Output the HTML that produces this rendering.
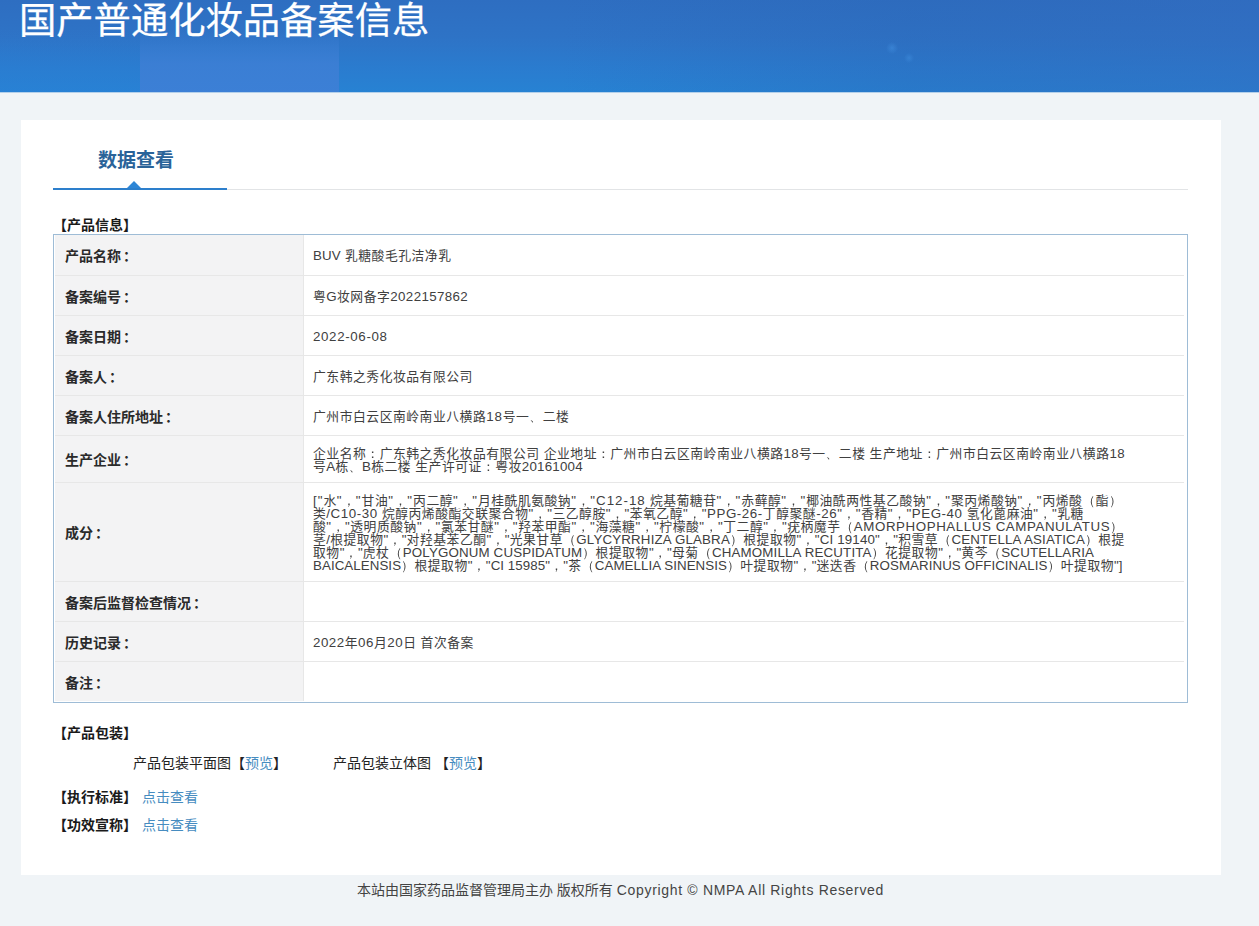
<!DOCTYPE html>
<html lang="zh-CN">
<head>
<meta charset="utf-8">
<title>国产普通化妆品备案信息</title>
<style>
*{box-sizing:border-box;margin:0;padding:0}
html,body{width:1259px;height:926px;overflow:hidden}
body{background:#f0f4f7;font-family:"Liberation Sans","Noto Sans CJK SC",sans-serif;font-size:14px;color:#333;position:relative;text-spacing-trim:space-all}
.a{letter-spacing:var(--ls,0px)}
.p{font-family:"WenQuanYi Zen Hei","Noto Sans CJK SC",sans-serif}
.hdr{position:absolute;left:0;top:0;width:1259px;height:93px;border-bottom:1px solid #b4d0ea;overflow:hidden;background:linear-gradient(180deg,#2e6ec1 0%,#2e73c6 40%,#2a7ccf 75%,#2782d3 100%)}
.hb1{position:absolute;left:140px;top:30px;width:199px;height:62px;background:linear-gradient(180deg,rgba(64,127,213,0) 0,rgba(64,127,213,.45) 30%,rgba(63,127,213,.8) 55%,rgba(62,127,214,.9) 100%)}
.hb2{position:absolute;left:560px;top:0;width:699px;height:92px;background:linear-gradient(90deg,rgba(44,100,180,0),rgba(44,100,180,.3) 50%,rgba(50,106,190,.5))}
.hb4{position:absolute;left:880px;top:36px;width:44px;height:34px;background:radial-gradient(circle 6px at 12px 12px,rgba(70,150,230,.45),rgba(70,150,230,0)),radial-gradient(circle 5px at 29px 22px,rgba(70,150,230,.4),rgba(70,150,230,0))}
.hb3{position:absolute;left:0;top:0;width:140px;height:92px;background:linear-gradient(180deg,rgba(42,128,215,0) 30%,rgba(42,128,215,.4) 100%)}
.hdr h1{position:absolute;left:19px;top:-6px;font-size:37.3px;line-height:54px;font-weight:400;color:#fff;white-space:nowrap;-webkit-text-stroke:.25px #fff}
.card{position:absolute;left:21px;top:120px;width:1200px;height:755px;background:#fff}
.tab{position:absolute;left:98px;top:147px;font-size:19px;line-height:28px;font-weight:700;color:#2a6399;white-space:nowrap}
.ln-g{position:absolute;left:53px;top:189px;width:1135px;height:1px;background:#e2e4e6}
.ln-b{position:absolute;left:53px;top:188px;width:174px;height:2px;background:#2d7fcc}
.tri{position:absolute;left:127px;top:181px;width:0;height:0;border-left:7px solid transparent;border-right:7px solid transparent;border-bottom:7px solid #2e86d6}
.sec{position:absolute;left:53px;font-size:14px;font-weight:700;color:#1a1a1a;line-height:20px;white-space:nowrap}
.tbl{position:absolute;left:53px;top:234px;width:1135px;height:469px;border:1px solid #9ebcd6;background:#fff}
.lab{position:absolute;left:1px;width:248px;background:#f3f3f4;border-bottom:1px solid #e7e7e7;font-size:14px;font-weight:700;color:#2a2a2a;padding-left:10px;padding-bottom:0px;display:flex;align-items:center;white-space:nowrap}
.val{position:absolute;left:249px;width:881px;border-left:1px solid #e7e7e7;border-bottom:1px solid #e7e7e7;font-size:13.33px;color:#404040;padding-left:9px;padding-top:2px;display:flex;align-items:center}
.val.m{padding-top:2px}
.last{border-bottom:0}
.lab .p{font-family:"Noto Sans CJK JP",sans-serif;position:relative;left:2px}
.val div{line-height:13.1px;white-space:nowrap;font-size:12.8px;letter-spacing:.53px}
.val .a{font-size:13.33px}
.val .ln{display:block;height:13.1px;line-height:13.1px}
.t{position:absolute;white-space:nowrap;line-height:20px;color:#222}
.sp{display:inline-block;width:4px}
a{color:#468cc0;text-decoration:none}
.lk{font-weight:400;margin-left:5px}
.foot{position:absolute;left:0;top:880px;width:1241px;text-align:center;font-size:14px;line-height:20px;color:#444;white-space:nowrap}
</style>
</head>
<body>
<div class="hdr">
<div class="hb1"></div><div class="hb2"></div><div class="hb3"></div><div class="hb4"></div>
<h1>国产普通化妆品备案信息</h1></div>
<div class="card"></div>
<div class="tab">数据查看</div>
<div class="ln-g"></div><div class="ln-b"></div><div class="tri"></div>
<div class="sec" style="top:215px">【产品信息】</div>
<div class="tbl">
 <div class="lab" style="top:0px;height:41px"><span>产品名称<span class="p">：</span></span></div><div class="val" style="top:0px;height:41px"><div><span class="ln" id="v1" style="--ls:0.133px"><span class="a">BUV</span> 乳糖酸毛孔洁净乳</span></div></div>
 <div class="lab" style="top:41px;height:40px"><span>备案编号<span class="p">：</span></span></div><div class="val" style="top:41px;height:40px"><div><span class="ln" id="v2" style="--ls:0.345px">粤<span class="a">G</span>妆网备字<span class="a">2022157862</span></span></div></div>
 <div class="lab" style="top:81px;height:40px"><span>备案日期<span class="p">：</span></span></div><div class="val" style="top:81px;height:40px"><div><span class="ln" id="v3" style="--ls:0.640px"><span class="a">2022-06-08</span></span></div></div>
 <div class="lab" style="top:121px;height:40px"><span>备案人<span class="p">：</span></span></div><div class="val" style="top:121px;height:40px"><div><span class="ln" id="v4" style="--ls:0.000px">广东韩之秀化妆品有限公司</span></div></div>
 <div class="lab" style="top:161px;height:40px"><span>备案人住所地址<span class="p">：</span></span></div><div class="val" style="top:161px;height:40px"><div><span class="ln" id="v5" style="--ls:0.800px">广州市白云区南岭南业八横路<span class="a">18</span>号一<span class="p">、</span>二楼</span></div></div>
 <div class="lab" style="top:201px;height:47px"><span>生产企业<span class="p">：</span></span></div><div class="val m" style="top:201px;height:47px"><div><span class="ln" id="v6a" style="--ls:0.250px">企业名称<span class="p">：</span>广东韩之秀化妆品有限公司 企业地址<span class="p">：</span>广州市白云区南岭南业八横路<span class="a">18</span>号一<span class="p">、</span>二楼 生产地址<span class="p">：</span>广州市白云区南岭南业八横路<span class="a">18</span></span><span class="ln" id="v6b" style="--ls:0.200px">号<span class="a">A</span>栋<span class="p">、</span><span class="a">B</span>栋二楼 生产许可证<span class="p">：</span>粤妆<span class="a">20161004</span></span></div></div>
 <div class="lab" style="top:248px;height:99px"><span>成分<span class="p">：</span></span></div><div class="val m" style="top:248px;height:99px"><div><span class="ln" id="i1" style="--ls:1.008px"><span class="a">[&quot;</span>水<span class="a">&quot;</span><span class="p">，</span><span class="a">&quot;</span>甘油<span class="a">&quot;</span><span class="p">，</span><span class="a">&quot;</span>丙二醇<span class="a">&quot;</span><span class="p">，</span><span class="a">&quot;</span>月桂酰肌氨酸钠<span class="a">&quot;</span><span class="p">，</span><span class="a">&quot;C12-18</span> 烷基葡糖苷<span class="a">&quot;</span><span class="p">，</span><span class="a">&quot;</span>赤藓醇<span class="a">&quot;</span><span class="p">，</span><span class="a">&quot;</span>椰油酰两性基乙酸钠<span class="a">&quot;</span><span class="p">，</span><span class="a">&quot;</span>聚丙烯酸钠<span class="a">&quot;</span><span class="p">，</span><span class="a">&quot;</span>丙烯酸<span class="p">（</span>酯<span class="p">）</span></span><span class="ln" id="i2" style="--ls:0.577px">类<span class="a">/C10-30</span> 烷醇丙烯酸酯交联聚合物<span class="a">&quot;</span><span class="p">，</span><span class="a">&quot;</span>三乙醇胺<span class="a">&quot;</span><span class="p">，</span><span class="a">&quot;</span>苯氧乙醇<span class="a">&quot;</span><span class="p">，</span><span class="a">&quot;PPG-26-</span>丁醇聚醚<span class="a">-26&quot;</span><span class="p">，</span><span class="a">&quot;</span>香精<span class="a">&quot;</span><span class="p">，</span><span class="a">&quot;PEG-40</span> 氢化蓖麻油<span class="a">&quot;</span><span class="p">，</span><span class="a">&quot;</span>乳糖</span><span class="ln" id="i3" style="--ls:0.566px">酸<span class="a">&quot;</span><span class="p">，</span><span class="a">&quot;</span>透明质酸钠<span class="a">&quot;</span><span class="p">，</span><span class="a">&quot;</span>氯苯甘醚<span class="a">&quot;</span><span class="p">，</span><span class="a">&quot;</span>羟苯甲酯<span class="a">&quot;</span><span class="p">，</span><span class="a">&quot;</span>海藻糖<span class="a">&quot;</span><span class="p">，</span><span class="a">&quot;</span>柠檬酸<span class="a">&quot;</span><span class="p">，</span><span class="a">&quot;</span>丁二醇<span class="a">&quot;</span><span class="p">，</span><span class="a">&quot;</span>疣柄魔芋<span class="p">（</span><span class="a">AMORPHOPHALLUS CAMPANULATUS</span><span class="p">）</span></span><span class="ln" id="i4" style="--ls:0.154px">茎<span class="a">/</span>根提取物<span class="a">&quot;</span><span class="p">，</span><span class="a">&quot;</span>对羟基苯乙酮<span class="a">&quot;</span><span class="p">，</span><span class="a">&quot;</span>光果甘草<span class="p">（</span><span class="a">GLYCYRRHIZA GLABRA</span><span class="p">）</span>根提取物<span class="a">&quot;</span><span class="p">，</span><span class="a">&quot;CI 19140&quot;</span><span class="p">，</span><span class="a">&quot;</span>积雪草<span class="p">（</span><span class="a">CENTELLA ASIATICA</span><span class="p">）</span>根提</span><span class="ln" id="i5" style="--ls:0.150px">取物<span class="a">&quot;</span><span class="p">，</span><span class="a">&quot;</span>虎杖<span class="p">（</span><span class="a">POLYGONUM CUSPIDATUM</span><span class="p">）</span>根提取物<span class="a">&quot;</span><span class="p">，</span><span class="a">&quot;</span>母菊<span class="p">（</span><span class="a">CHAMOMILLA RECUTITA</span><span class="p">）</span>花提取物<span class="a">&quot;</span><span class="p">，</span><span class="a">&quot;</span>黄芩<span class="p">（</span><span class="a">SCUTELLARIA</span></span><span class="ln" id="i6" style="--ls:0.061px"><span class="a">BAICALENSIS</span><span class="p">）</span>根提取物<span class="a">&quot;</span><span class="p">，</span><span class="a">&quot;CI 15985&quot;</span><span class="p">，</span><span class="a">&quot;</span>茶<span class="p">（</span><span class="a">CAMELLIA SINENSIS</span><span class="p">）</span>叶提取物<span class="a">&quot;</span><span class="p">，</span><span class="a">&quot;</span>迷迭香<span class="p">（</span><span class="a">ROSMARINUS OFFICINALIS</span><span class="p">）</span>叶提取物<span class="a">&quot;]</span></span></div></div>
 <div class="lab" style="top:347px;height:40px"><span>备案后监督检查情况<span class="p">：</span></span></div><div class="val" style="top:347px;height:40px"><div></div></div>
 <div class="lab" style="top:387px;height:40px"><span>历史记录<span class="p">：</span></span></div><div class="val" style="top:387px;height:40px"><div><span class="ln" id="v9" style="--ls:0.525px"><span class="a">2022</span>年<span class="a">06</span>月<span class="a">20</span>日 首次备案</span></div></div>
 <div class="lab last" style="top:427px;height:39px"><span>备注<span class="p">：</span></span></div><div class="val last" style="top:427px;height:39px"><div></div></div>
</div>
<div class="sec" style="top:723px">【产品包装】</div>
<div class="t" style="left:133px;top:753px">产品包装平面图【<a>预览</a>】</div>
<div class="t" style="left:333px;top:753px">产品包装立体图<span class="sp"></span>【<a>预览</a>】</div>
<div class="sec" style="top:787px">【执行标准】<a class="lk">点击查看</a></div>
<div class="sec" style="top:815px">【功效宣称】<a class="lk">点击查看</a></div>
<div class="foot"><span class="ln" id="ft" style="--ls:0.683px">本站由国家药品监督管理局主办 版权所有 <span class="a">Copyright © NMPA All Rights Reserved</span></span></div>
</body>
</html>
